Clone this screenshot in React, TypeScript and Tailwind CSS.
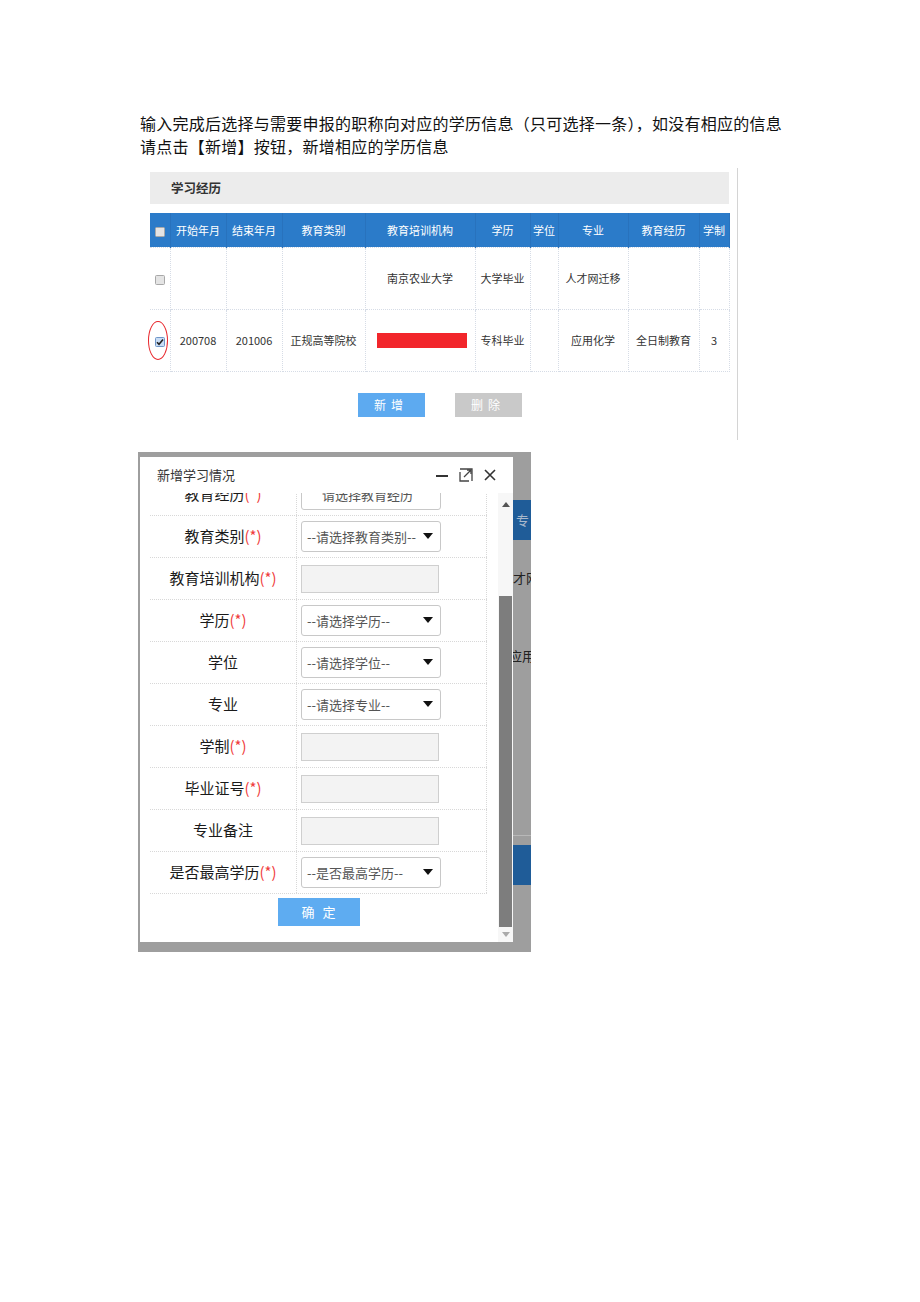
import React from 'react';

const cols = [
  { w: 20, label: '' },
  { w: 56, label: '开始年月' },
  { w: 56, label: '结束年月' },
  { w: 83, label: '教育类别' },
  { w: 110, label: '教育培训机构' },
  { w: 55, label: '学历' },
  { w: 28, label: '学位' },
  { w: 70, label: '专业' },
  { w: 71, label: '教育经历' },
  { w: 30, label: '学制' },
];

const rows = [
  ['', '', '', '南京农业大学', '大学毕业', '', '人才网迁移', '', ''],
  ['200708', '201006', '正规高等院校', '#red', '专科毕业', '', '应用化学', '全日制教育', '3'],
];

type Field = { label: string; req?: boolean; kind: 'select' | 'input'; ph?: string; noCaret?: boolean };

const fields: Field[] = [
  { label: '教育经历', req: true, kind: 'select', ph: '请选择教育经历', noCaret: true },
  { label: '教育类别', req: true, kind: 'select', ph: '--请选择教育类别--' },
  { label: '教育培训机构', req: true, kind: 'input' },
  { label: '学历', req: true, kind: 'select', ph: '--请选择学历--' },
  { label: '学位', kind: 'select', ph: '--请选择学位--' },
  { label: '专业', kind: 'select', ph: '--请选择专业--' },
  { label: '学制', req: true, kind: 'input' },
  { label: '毕业证号', req: true, kind: 'input' },
  { label: '专业备注', kind: 'input' },
  { label: '是否最高学历', req: true, kind: 'select', ph: '--是否最高学历--' },
];

function Box({ checked }: { checked?: boolean }) {
  return (
    <svg width="10" height="10" viewBox="0 0 10 10" className="inline-block">
      <rect x="0.5" y="0.5" width="9" height="9" rx="1" fill={checked ? '#c9ddf5' : '#e4e4e4'} stroke={checked ? '#6f96c8' : '#a8a8a8'} />
      {checked && <path d="M2 5.2 L4 7.3 L8 2.6" fill="none" stroke="#222" strokeWidth="1.6" />}
    </svg>
  );
}

function Caret() {
  return (
    <svg width="10" height="6" viewBox="0 0 10 6" className="absolute right-[7px] top-[11px]">
      <path d="M0 0 H10 L5 6 Z" fill="#111" />
    </svg>
  );
}

export default function App() {
  return (
    <div className="w-[920px] h-[1302px] bg-white font-['Noto_Sans_CJK_SC','Noto_Sans',sans-serif] text-[#111] overflow-hidden">
      <p className="pt-[112px] pl-[140px] pr-[120px] text-[16px] leading-[23px] tracking-[0.25px] whitespace-nowrap">
        输入完成后选择与需要申报的职称向对应的学历信息（只可选择一条），如没有相应的信息
        <br />
        请点击【新增】按钮，新增相应的学历信息
      </p>

      {/* table screenshot */}
      <div className="mt-[10px] ml-[148px] w-[590px] h-[272px] border-r border-[#d4d4d4] pt-[4px] pl-[2px]">
        <div className="w-[579px] h-[32px] bg-[#ececec] flex items-center pl-[21px] text-[12.5px] font-bold text-[#333]">
          学习经历
        </div>
        <table className="mt-[9px] w-[579px] table-fixed border-collapse text-[11px]">
          <colgroup>
            {cols.map((c, i) => (
              <col key={i} style={{ width: c.w }} />
            ))}
          </colgroup>
          <thead>
            <tr className="h-[34px] bg-[#2b7bc9] text-white">
              {cols.map((c, i) => (
                <th key={i} className="font-normal border-r border-[#2872bd] text-center whitespace-nowrap">
                  {i === 0 ? <Box /> : c.label}
                </th>
              ))}
            </tr>
          </thead>
          <tbody>
            {rows.map((r, ri) => (
              <tr key={ri} className="h-[62px] text-[#333]">
                <td className="relative border border-dotted border-[#d6dce6] border-l-0 text-center">
                  <Box checked={ri === 1} />
                  {ri === 1 && (
                    <div className="absolute left-[-2px] top-[11px] w-[20px] h-[39px] rounded-[50%] border-[1.5px] border-[#e8262b]" />
                  )}
                </td>
                {r.map((v, ci) => (
                  <td key={ci} className="border border-dotted border-[#d6dce6] text-center whitespace-nowrap overflow-hidden">
                    {v === '#red' ? <div className="ml-[11px] w-[90px] h-[15px] bg-[#f2262b]" /> : v}
                  </td>
                ))}
              </tr>
            ))}
          </tbody>
        </table>
        <div className="mt-[21px] w-[579px] flex justify-center gap-[30px]">
          <div className="w-[67px] h-[24px] bg-[#5daaf0] text-white text-[12px] tracking-[5px] flex items-center justify-center">新增</div>
          <div className="w-[67px] h-[24px] bg-[#c9c9c9] text-white text-[12px] tracking-[5px] flex items-center justify-center">删除</div>
        </div>
      </div>

      {/* dialog screenshot */}
      <div className="mt-[12px] ml-[138px] w-[393px] h-[500px] bg-[#9e9e9e] flex">
        <div className="ml-[2px] mt-[5px] w-[373px] h-[485px] bg-white flex flex-col shrink-0">
          <div className="h-[36px] flex items-center pl-[17px] pr-[16px] text-[13px] text-[#333]">
            <span className="flex-1">新增学习情况</span>
            <div className="flex items-center gap-[10px]">
              <svg width="14" height="14" viewBox="0 0 14 14">
                <path d="M1 8 H13" stroke="#333" strokeWidth="2" />
              </svg>
              <svg width="14" height="14" viewBox="0 0 14 14">
                <path d="M1 4 V13 H10" fill="none" stroke="#444" strokeWidth="1.3" />
                <path d="M1 1 H13 V13" fill="none" stroke="#444" strokeWidth="1.3" />
                <path d="M5 9 L12 2 M8 2 H12 V6" fill="none" stroke="#444" strokeWidth="1.3" />
              </svg>
              <svg width="14" height="14" viewBox="0 0 14 14">
                <path d="M2 2 L12 12 M12 2 L2 12" stroke="#333" strokeWidth="1.6" />
              </svg>
            </div>
          </div>
          <div className="flex flex-1 overflow-hidden">
            <div className="w-[357px] pl-[10px] overflow-hidden">
              <div className="-mt-[19px] w-[337px]">
                {fields.map((f, i) => (
                  <div key={i} className="flex h-[42px] border-b border-dotted border-[#d8d8d8]">
                    <div className="w-[147px] border-r border-dotted border-[#d8d8d8] flex items-center justify-center text-[15px] text-[#1a1a1a] whitespace-nowrap">
                      {f.label}
                      {f.req && <span className="text-[#f03c3c]">(*)</span>}
                    </div>
                    <div className="w-[190px] border-r border-dotted border-[#d8d8d8] flex items-center pl-[4px]">
                      {f.kind === 'select' ? (
                        <div className="relative w-[140px] h-[31px] border border-[#c8c8c8] rounded-[3px] bg-white overflow-hidden">
                          <span className={`absolute top-[5px] text-[13px] leading-[20px] text-[#555] whitespace-nowrap ${f.noCaret ? 'left-[20px]' : 'left-[5px]'}`}>{f.ph}</span>
                          {!f.noCaret && <Caret />}
                        </div>
                      ) : (
                        <div className="w-[138px] h-[28px] border border-[#cfcfcf] bg-[#f3f3f3]" />
                      )}
                    </div>
                  </div>
                ))}
                <div className="mt-[4px] flex justify-center">
                  <div className="w-[82px] h-[28px] bg-[#5eacf1] text-white text-[13px] tracking-[8px] pl-[8px] flex items-center justify-center">确定</div>
                </div>
              </div>
            </div>
            <div className="ml-[10px] w-[15px] flex flex-col items-center bg-[#f7f7f7]">
              <svg width="8" height="6" viewBox="0 0 8 6" className="mt-[8px]">
                <path d="M0 6 L4 1 L8 6 Z" fill="#555" />
              </svg>
              <div className="mt-[89px] w-[13px] h-[331px] bg-[#7d7d7d]" />
              <svg width="8" height="6" viewBox="0 0 8 6" className="mt-[5px]">
                <path d="M0 0 L4 5 L8 0 Z" fill="#aaa" />
              </svg>
            </div>
          </div>
        </div>
        {/* dimmed page behind */}
        <div className="flex-1 overflow-hidden flex flex-col text-[13px] whitespace-nowrap">
          <div className="h-[48px]" />
          <div className="h-[40px] bg-[#1f5c98] text-[#a9b9cc] flex items-center pl-[3px]">专</div>
          <div className="h-[295px] relative text-[#222]">
            <span className="absolute left-[-13px] top-[28px]">人才网</span>
            <span className="absolute left-[-4px] top-[106px]">应用</span>
          </div>
          <div className="h-[1px] bg-[#b8b8b8]" />
          <div className="mt-[9px] h-[40px] bg-[#1f5c98]" />
        </div>
      </div>
    </div>
  );
}
